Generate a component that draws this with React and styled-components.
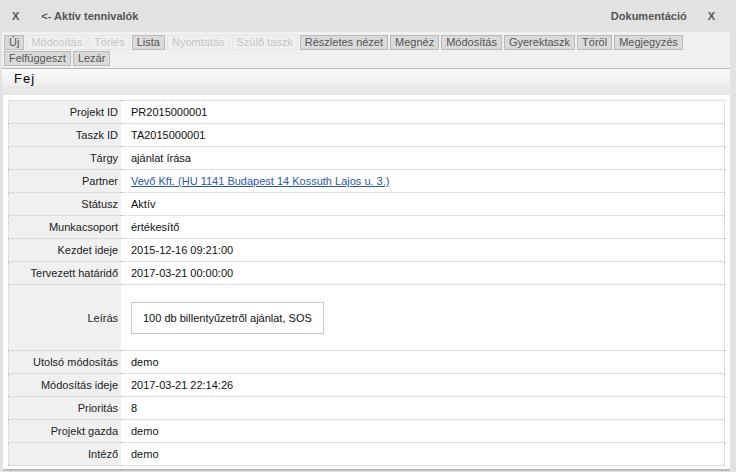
import styled, { createGlobalStyle } from "styled-components";

const GlobalStyle = createGlobalStyle`
  html, body {
    margin: 0;
    padding: 0;
    background: #e2e2e2;
  }
  body {
    font-family: "Liberation Sans", Arial, sans-serif;
    font-size: 11px;
    color: #111;
  }
`;

const Page = styled.div`
  width: 736px;
  height: 472px;
  overflow: hidden;
  background: #e2e2e2;
  display: flex;
  flex-direction: column;
`;

const TopBar = styled.div`
  height: 32px;
  flex-shrink: 0;
  display: flex;
  align-items: center;
  padding: 0 21px 0 12px;
  font-weight: bold;
  font-size: 11px;
  color: #555;
`;

const TopLink = styled.span`
  margin-left: ${(p) => p.$gap || 0}px;
  cursor: pointer;
`;

const Spacer = styled.div`
  flex: 1;
`;

const Toolbar = styled.div`
  margin: 0 6px 0 2px;
  background: #f0f0f0;
  display: flex;
  flex-wrap: wrap;
  row-gap: 1px;
  padding: 3px 2px 2px;
  border-bottom: 1px solid #b8b8b8;
`;

const ToolButton = styled.button`
  font-family: inherit;
  font-size: 11px;
  line-height: 13px;
  height: 15px;
  padding: 0 4px;
  margin: 0 2px 0 0;
  border: 1px solid ${(p) => (p.$disabled ? "#e4e4e4" : "#bababa")};
  background: ${(p) => (p.$disabled ? "#f0f0f0" : "#dadada")};
  color: ${(p) => (p.$disabled ? "#c4c4c4" : "#555")};
  cursor: ${(p) => (p.$disabled ? "default" : "pointer")};
`;

const SectionHead = styled.div`
  margin: 0 6px 0 2px;
  height: 17px;
  line-height: 19px;
  padding-left: 12px;
  font-size: 13px;
  letter-spacing: 1px;
  color: #000;
  background: linear-gradient(#fafafa, #eeeeee);
`;

const Gap = styled.div`
  margin: 0 6px 0 2px;
  height: 9px;
  background: #e8e8e8;
`;

const Panel = styled.div`
  margin: 0 6px 0 3px;
  background: #fff;
  padding: 5px 5px 3px 5px;
  border-bottom: 2px solid #bcbcbc;
`;

const Table = styled.table`
  width: 100%;
  border-collapse: collapse;
  border: 1px dotted #c4c4c4;
`;

const Row = styled.tr`
  border-bottom: 1px dotted #c4c4c4;
`;

const Label = styled.td`
  width: 109px;
  height: 22px;
  padding: 0 3px 0 0;
  text-align: right;
  background: #f0f0f0;
  color: #222;
  vertical-align: middle;
  white-space: nowrap;
`;

const Value = styled.td`
  padding: 0 0 0 10px;
  vertical-align: middle;
  height: ${(p) => p.$h || 22}px;
`;

const PartnerLink = styled.a`
  color: #2a5aae;
  text-decoration: underline;
`;

const TextBox = styled.div`
  display: inline-block;
  height: 30px;
  line-height: 30px;
  border: 1px solid #c8c8c8;
  padding: 0 11px;
  margin-top: 1px;
`;

const buttons = [
  ["Új", false],
  ["Módosítás", true],
  ["Törlés", true],
  ["Lista", false],
  ["Nyomtatás", true],
  ["Szülő taszk", true],
  ["Részletes nézet", false],
  ["Megnéz", false],
  ["Módosítás", false],
  ["Gyerektaszk", false],
  ["Töröl", false],
  ["Megjegyzés", false],
  ["Felfüggeszt", false],
  ["Lezár", false],
];

const rows = [
  ["Projekt ID", "PR2015000001"],
  ["Taszk ID", "TA2015000001"],
  ["Tárgy", "ajánlat írása"],
  ["Partner", "link"],
  ["Státusz", "Aktív"],
  ["Munkacsoport", "értékesítő"],
  ["Kezdet ideje", "2015-12-16 09:21:00"],
  ["Tervezett határidő", "2017-03-21 00:00:00"],
  ["Leírás", "box"],
  ["Utolsó módosítás", "demo"],
  ["Módosítás ideje", "2017-03-21 22:14:26"],
  ["Prioritás", "8"],
  ["Projekt gazda", "demo"],
  ["Intéző", "demo"],
];

function renderValue(v) {
  if (v === "link")
    return <PartnerLink href="#">Vevő Kft. (HU 1141 Budapest 14 Kossuth Lajos u. 3.)</PartnerLink>;
  if (v === "box") return <TextBox>100 db billentyűzetről ajánlat, SOS</TextBox>;
  return v;
}

export default function App() {
  return (
    <Page>
      <GlobalStyle />
      <TopBar>
        <TopLink>X</TopLink>
        <TopLink $gap={22}>&lt;- Aktív tennivalók</TopLink>
        <Spacer />
        <TopLink>Dokumentáció</TopLink>
        <TopLink $gap={21}>X</TopLink>
      </TopBar>
      <Toolbar>
        {buttons.map(([t, dis], i) => (
          <ToolButton key={i} $disabled={dis}>
            {t}
          </ToolButton>
        ))}
      </Toolbar>
      <SectionHead>Fej</SectionHead>
      <Gap />
      <Panel>
        <Table>
          <tbody>
            {rows.map(([l, v]) => (
              <Row key={l}>
                <Label>{l}</Label>
                <Value $h={v === "box" ? 65 : 22}>{renderValue(v)}</Value>
              </Row>
            ))}
          </tbody>
        </Table>
      </Panel>
    </Page>
  );
}
